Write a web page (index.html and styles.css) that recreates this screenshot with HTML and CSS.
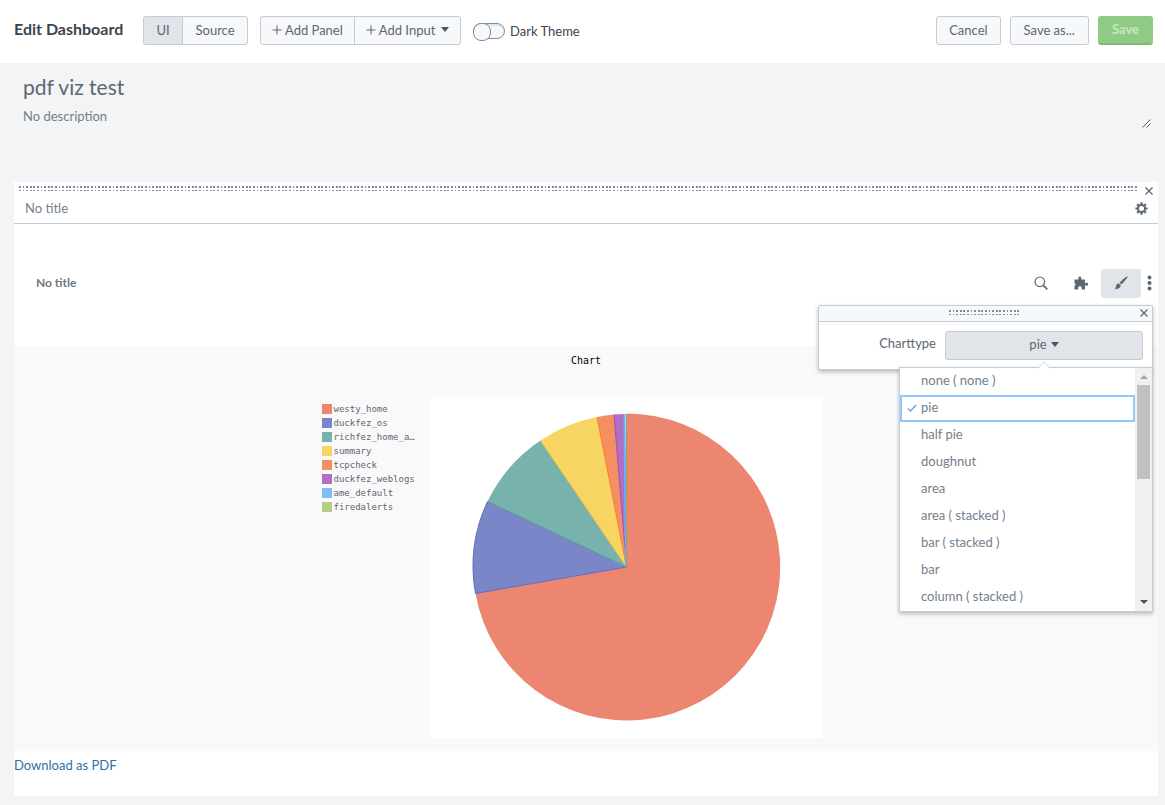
FILE: index.html
```html
<!DOCTYPE html>
<html lang="en">
<head>
<meta charset="utf-8">
<title>Edit Dashboard</title>
<link rel="stylesheet" href="styles.css">
</head>
<body>
<header class="toolbar">
  <h1 class="toolbar-title">Edit Dashboard</h1>
  <div class="group group-mode">
    <button class="btn active" type="button">UI</button>
    <button class="btn" type="button">Source</button>
  </div>
  <div class="group group-add">
    <button class="btn" type="button"><svg class="plus" viewBox="0 0 10 10"><path d="M5 0.5v9M0.5 5h9"/></svg>Add Panel</button>
    <button class="btn" type="button"><svg class="plus" viewBox="0 0 10 10"><path d="M5 0.5v9M0.5 5h9"/></svg>Add Input<span class="caret"></span></button>
  </div>
  <label class="theme"><input class="switch" type="checkbox">Dark Theme</label>
  <div class="actions">
    <button class="btn" type="button">Cancel</button>
    <button class="btn wide" type="button">Save as...</button>
    <button class="btn wide save" type="button">Save</button>
  </div>
</header>

<section class="intro">
  <h2 class="dash-title">pdf viz test</h2>
  <div class="desc-row">
    <p class="description">No description</p>
    <svg class="resize" viewBox="0 0 9 9"><path d="M0.5 8.5l8-8M4.5 8.5l4-4"/></svg>
  </div>
</section>

<main class="panel">
  <div class="panel-grip">
    <svg class="dots"><use href="#grip-rows"/></svg>
    <button class="close" type="button" aria-label="Remove panel"><svg viewBox="0 0 8 8"><path d="M0.5 0.5l7 7M7.5 0.5l-7 7"/></svg></button>
  </div>
  <div class="panel-head">
    <span>No title</span>
    <button class="icon-btn gear" type="button" aria-label="Panel settings">
      <svg viewBox="0 0 14 14"><circle cx="7" cy="7" r="3.8" fill="none" stroke="currentColor" stroke-width="2.2"/><path d="M7 0.4v2M7 11.6v2M0.4 7h2M11.6 7h2M2.3 2.3l1.4 1.4M10.3 10.3l1.4 1.4M2.3 11.7l1.4-1.4M10.3 3.7l1.4-1.4" stroke="currentColor" stroke-width="2.4"/></svg>
    </button>
  </div>
  <div class="element-head">
    <h3 class="element-title">No title</h3>
    <div class="tools">
      <button class="tool" type="button" aria-label="Search"><svg viewBox="0 0 14 14"><circle cx="5.8" cy="5.8" r="4.8" fill="none" stroke="currentColor" stroke-width="1.2"/><path d="M9.3 9.3l4 4" stroke="currentColor" stroke-width="1.8"/></svg></button>
      <button class="tool" type="button" aria-label="Visualization"><svg viewBox="0 0 14 14"><path fill="currentColor" d="M0.500 3.500H4.400V2.200C4.400 0 7.300 0 7.300 2.200V3.500H11V7.200H12C12.300 6.200 14 6.400 14 8.200S12.300 10.200 12 9.300H11V13.500H7.600V12.200C8.200 9.600 3.600 9.600 4.200 12.200V13.500H0.500V9.800C2 9.500 2 7.500 0.500 7.200Z"/></svg></button>
      <button class="tool selected" type="button" aria-label="Format"><svg viewBox="0 0 14 14"><path fill="currentColor" d="M13.6 0.4C14.2 1 10 6.2 7.4 8.6L5.5 6.8C8 4.2 13-0.2 13.6 0.4ZM4.8 7.5L6.7 9.3C6.6 12 3.5 13.5 0.4 13.2 2.2 12.4 1.5 11.3 2.1 9.4 2.5 8.2 3.6 7.4 4.8 7.5Z"/></svg></button>
      <button class="more" type="button" aria-label="More"><svg viewBox="0 0 4 16"><g fill="currentColor"><circle cx="2" cy="2.5" r="2"/><circle cx="2" cy="8" r="2"/><circle cx="2" cy="13.5" r="2"/></g></svg></button>
      <div class="popover">
        <div class="popover-grip">
          <svg class="dots"><use href="#grip-rows"/></svg>
          <button class="close" type="button" aria-label="Close"><svg viewBox="0 0 8 8"><path d="M0.5 0.5l7 7M7.5 0.5l-7 7"/></svg></button>
        </div>
        <div class="field">
          <label for="charttype">Charttype</label>
          <button class="btn active picker" id="charttype" type="button" aria-haspopup="listbox">pie<span class="caret"></span></button>
        </div>
        <div class="menu">
          <svg class="pointer" viewBox="0 0 14 8"><path d="M1 7.5L7 1l6 6.5"/></svg>
          <div class="options" role="listbox" aria-label="Charttype">
            <button class="option" role="option" type="button">none ( none )</button>
            <button class="option checked" role="option" aria-selected="true" type="button"><svg class="tick" viewBox="0 0 10 8"><path d="M1 4.5l2.500 2.500L9 1"/></svg>pie</button>
            <button class="option" role="option" type="button">half pie</button>
            <button class="option" role="option" type="button">doughnut</button>
            <button class="option" role="option" type="button">area</button>
            <button class="option" role="option" type="button">area ( stacked )</button>
            <button class="option" role="option" type="button">bar ( stacked )</button>
            <button class="option" role="option" type="button">bar</button>
            <button class="option" role="option" type="button">column ( stacked )</button>
          </div>
          <div class="scrollbar"><span class="arrow up"></span><span class="thumb"></span><span class="arrow down"></span></div>
        </div>
      </div>
    </div>
  </div>

  <div class="viz">
    <h4 class="chart-title">Chart</h4>
    <div class="chart-body">
      <ul class="legend">
        <li><span class="swatch red"></span>westy_home</li>
        <li><span class="swatch indigo"></span>duckfez_os</li>
        <li><span class="swatch teal"></span>richfez_home_a…</li>
        <li><span class="swatch yellow"></span>summary</li>
        <li><span class="swatch orange"></span>tcpcheck</li>
        <li><span class="swatch purple"></span>duckfez_weblogs</li>
        <li><span class="swatch blue"></span>ame_default</li>
        <li><span class="swatch green"></span>firedalerts</li>
      </ul>
      <svg class="pie" viewBox="0 0 393 341" role="img" aria-label="Pie chart">
        <path fill="#ec8670" d="M196.5 170V16.500A153.500 153.500 0 1 1 45.500 196.500Z"/>
        <path fill="#7b86c8" d="M196.5 170L45.5 196.5A153.5 153.5 0 0 1 57.5 104.5Z"/>
        <path fill="#78b2ac" d="M196.5 170L57.5 104.5A153.5 153.5 0 0 1 110.5 43.5Z"/>
        <path fill="#f8d463" d="M196.5 170L110.5 43.5A153 153 0 0 1 167 20Z"/>
        <path fill="#f58f60" d="M196.5 170L167 20A153 153 0 0 1 184 17.5Z"/>
        <path fill="#b06fc5" d="M196.5 170L184 17.5A153 153 0 0 1 194 17Z"/>
        <g fill="none">
          <path stroke="#5c6bc0" d="M57.5 104.5A153.5 153.5 0 0 0 45.5 196.5L196.5 170"/>
          <path stroke="#4f9a93" d="M57.5 104.5L196.5 170"/>
          <path stroke="#eec23e" d="M110.5 43.5L196.5 170"/>
          <path stroke="#f47b3f" d="M167 20L196.5 170"/>
          <path stroke="#a04db8" d="M184 17.5L196.5 170"/>
          <path stroke="#64b5f6" stroke-width="2" d="M194.5 17L196 170"/>
          <path stroke="#9c9d68" d="M196.5 17V170"/>
        </g>
      </svg>
    </div>
  </div>
  <a class="download" href="#">Download as PDF</a>
</main>

<svg class="defs" aria-hidden="true">
  <defs>
    <pattern id="grip" width="18" height="6" patternUnits="userSpaceOnUse">
      <path fill="#818d9c" d="M0 0h2v2h-2zM4 0h1v2h-1zM7 0h2v2h-2zM11 0h2v2h-2zM14 0h2v2h-2zM0 4h2v1h-2zM4 4h1v1h-1zM7 4h2v1h-2zM11 4h2v1h-2zM14 4h2v1h-2z"/>
    </pattern>
    <symbol id="grip-rows"><rect width="100%" height="6" fill="url(#grip)"/></symbol>
  </defs>
</svg>
</body>
</html>
```
FILE: styles.css
```css
* { box-sizing: border-box; }

body {
  margin: 0;
  background: #f2f4f5;
  color: #5c6773;
  font: 13px/20px Lato, "Open Sans", sans-serif;
}

h1, h2, h3, h4, p, ul { margin: 0; padding: 0; }
button { font: inherit; color: inherit; cursor: pointer; }
svg { display: block; }
.defs { position: absolute; width: 0; height: 0; }

.toolbar {
  display: flex;
  align-items: center;
  height: 63px;
  padding: 0 12px 2px 14px;
  background: #fff;
}
.toolbar-title { width: 129px; padding-bottom: 3px; color: #3c444d; font-size: 16px; font-weight: 700; white-space: nowrap; }

.btn {
  display: flex;
  align-items: center;
  justify-content: center;
  height: 29px;
  padding: 0 12px 2px;
  border: 1px solid #c3cbd4;
  border-radius: 3px;
  background: #f7f8fa;
  white-space: nowrap;
}
.btn.active { background: #e1e5ea; }
.btn.wide { padding-left: 13px; padding-right: 13px; }
.group { display: flex; }
.group .btn:first-child { border-radius: 3px 0 0 3px; }
.group .btn + .btn { margin-left: -1px; border-radius: 0 3px 3px 0; }
.group-mode { width: 105px; }
.group-mode .btn { flex: 1 0 auto; }
.group-add { width: 201px; margin-left: 12px; }
.group-add .btn { flex: 1 0 auto; padding-left: 11px; padding-right: 11px; }
.plus { width: 10px; height: 10px; margin-right: 3px; fill: none; stroke: currentColor; }
.caret { border: 4px solid transparent; border-top: 5px solid #4a5463; border-bottom: 0; margin-left: 6px; }

.theme { display: flex; align-items: center; gap: 5px; margin-left: 12px; color: #3c444d; }
.switch {
  appearance: none;
  width: 32px;
  height: 16px;
  margin: 0;
  border: 1px solid #818d9c;
  border-radius: 8px;
  background: #f7f8fa;
  box-shadow: inset 0 2px 1px #e1e5ea;
}
.switch::before {
  content: "";
  display: block;
  width: 16px;
  height: 16px;
  margin: -1px;
  border: 1px solid #818d9c;
  border-radius: 8px;
  background: #f7f8fa;
}
.actions { display: flex; gap: 9px; margin-left: auto; }
.save { background: #8fcb84; border-color: #8fcb84; border-bottom: 2px solid #7dbb72; color: #c8e8c2; font-weight: 700; }

.intro { height: 119px; padding: 12px 14px 0 23px; }
.dash-title { font-size: 21px; font-weight: 400; line-height: 24px; }
.desc-row { display: flex; justify-content: space-between; align-items: flex-end; height: 29px; }
.description { align-self: flex-start; margin-top: 7px; color: #74808c; }
.resize { width: 9px; height: 9px; fill: none; stroke: #555; }

.panel { margin: 0 7px 9px 14px; background: #fff; }
.panel-grip { display: flex; height: 14px; padding: 4px 4px 0 5px; gap: 6px; }
.dots { flex: 1; height: 6px; }
.close { width: 10px; height: 10px; padding: 1px; border: 0; background: none; }
.close svg { width: 8px; height: 8px; fill: none; stroke: #5c6773; stroke-width: 1.3; }
.panel-head {
  display: flex;
  align-items: center;
  justify-content: space-between;
  height: 28px;
  padding: 0 10px 3px 11px;
  border-bottom: 1px solid #c3cbd4;
  color: #74808c;
}
.icon-btn { padding: 0; border: 0; background: none; color: #5c6773; }
.gear svg { width: 13px; height: 13px; }
.element-head { display: flex; align-items: center; justify-content: space-between; height: 122px; padding: 0 6px 4px 22px; }
.element-title { font-size: 12px; font-weight: 700; color: #6b7785; }
.tools { position: relative; display: flex; align-items: center; color: #5c6773; }
.tool { display: grid; place-items: center; width: 40px; height: 29px; padding: 0; border: 0; border-radius: 3px; background: none; }
.tool svg { width: 14px; height: 14px; }
.tool.selected { background: #e1e5ea; }
.more { padding: 0; border: 0; margin-left: 6px; background: none; }
.more svg { width: 5px; height: 16px; }

.popover {
  position: absolute;
  z-index: 2;
  top: 36px;
  right: -1px;
  width: 335px;
  border: 1px solid #c3cbd4;
  border-radius: 2px;
  background: #fff;
  box-shadow: 0 2px 4px rgba(0, 0, 0, .25);
}
.popover-grip { display: flex; justify-content: flex-end; align-items: center; height: 16px; padding: 0 3px 0 130px; border-bottom: 1px solid #c3cbd4; background: #f7f8fa; }
.popover-grip .dots { flex: 0 0 70px; margin-right: auto; }
.field { display: flex; justify-content: flex-end; gap: 9px; height: 47px; padding: 9px; color: #5c6773; }
.field label { margin-top: 2px; }
.picker { width: 198px; }
.picker .caret { margin-left: 4px; }
.menu {
  position: absolute;
  top: 61px;
  right: -1px;
  display: flex;
  width: 254px;
  border: 1px solid #c3cbd4;
  background: #fff;
  box-shadow: 0 2px 4px rgba(0, 0, 0, .25);
}
.pointer { position: absolute; top: -7px; left: 137px; width: 14px; height: 8px; fill: #fff; stroke: #d5dae0; }
.options { flex: 1; }
.option { position: relative; display: block; width: 100%; height: 27px; padding: 0 20px 3px 21px; border: 0; background: none; text-align: left; color: #74808c; }
.option.checked { outline: 2px solid #93c9f8; outline-offset: -2px; }
.tick { position: absolute; left: 7px; top: 9px; width: 10px; height: 8px; fill: none; stroke: #5aaaf0; stroke-width: 1.5; }
.scrollbar { display: flex; flex-direction: column; align-items: center; width: 17px; background: #f1f1f1; }
.arrow { border: 4px solid transparent; }
.arrow.up { border-top: 0; border-bottom-color: #a3a3a3; margin: 7px 0 6px; }
.thumb { width: 13px; height: 94px; background: #c1c1c1; }
.arrow.down { border-bottom: 0; border-top-color: #505050; margin: auto 0 7px; }

.viz { padding: 8px 0 13px; background: #f9f9f9; }
.chart-title { color: #000; font: 10px/14px "DejaVu Sans Mono", monospace; text-align: center; }
.chart-body { display: flex; justify-content: center; padding: 29px 28px 0 0; }
.legend { width: 108px; padding-top: 5px; list-style: none; font: 9px/14px "DejaVu Sans Mono", monospace; white-space: nowrap; }
.legend li { display: flex; align-items: center; gap: 2px; }
.swatch { width: 10px; height: 10px; }
.red { background: #ec8670; }
.indigo { background: #7b86c8; }
.teal { background: #78b2ac; }
.yellow { background: #f8d463; }
.orange { background: #f58f60; }
.purple { background: #b06fc5; }
.blue { background: #7dbff5; }
.green { background: #b1d083; }
.pie { width: 393px; height: 341px; background: #fff; }
.download { display: block; height: 45px; padding-top: 4px; color: #2f6f9f; text-decoration: none; }
```
